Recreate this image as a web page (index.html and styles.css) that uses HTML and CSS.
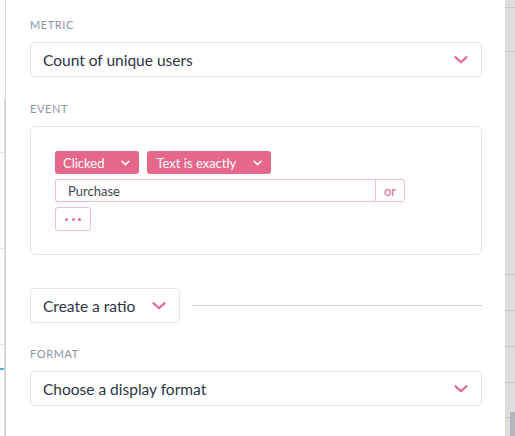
FILE: index.html
```html
<!DOCTYPE html>
<html>
<head>
<meta charset="utf-8">
<link rel="stylesheet" href="styles.css">
</head>
<body>
<div class="page">
  <div class="rail-left">
    <div class="rail-top"></div>
    <div class="rail-bottom">
      <div class="rl-gap g1"></div>
      <div class="rl-line"></div>
      <div class="rl-gap g2"></div>
      <div class="rl-line"></div>
      <div class="rl-gap g2"></div>
      <div class="rl-line"></div>
      <div class="rl-gap g3"></div>
      <div class="rl-blue"></div>
    </div>
  </div>

  <div class="panel">
    <div class="label first">METRIC</div>
    <div class="select">
      <span class="select-text">Count of unique users</span>
      <svg class="chev" width="14" height="8" viewBox="0 0 14 8"><path d="M1.5 1.2 L7 6.3 L12.5 1.2" fill="none" stroke="#e5678b" stroke-width="2.2" stroke-linecap="round" stroke-linejoin="round"/></svg>
    </div>

    <div class="label">EVENT</div>
    <div class="event-box">
      <div class="pills">
        <div class="pill"><span>Clicked</span><svg class="pchev" width="9" height="6" viewBox="0 0 9 6"><path d="M1 1.2 L4.5 4.6 L8 1.2" fill="none" stroke="#fff" stroke-width="1.5" stroke-linecap="round" stroke-linejoin="round"/></svg></div>
        <div class="pill"><span>Text is exactly</span><svg class="pchev" width="9" height="6" viewBox="0 0 9 6"><path d="M1 1.2 L4.5 4.6 L8 1.2" fill="none" stroke="#fff" stroke-width="1.5" stroke-linecap="round" stroke-linejoin="round"/></svg></div>
      </div>
      <div class="input-row">
        <div class="input">Purchase</div>
        <div class="or">or</div>
      </div>
      <div class="dots"><i></i><i></i><i></i></div>
    </div>

    <div class="ratio-row">
      <div class="ratio-btn">
        <span class="select-text">Create a ratio</span>
        <svg class="chev" width="14" height="8" viewBox="0 0 14 8"><path d="M1.5 1.2 L7 6.3 L12.5 1.2" fill="none" stroke="#e5678b" stroke-width="2.2" stroke-linecap="round" stroke-linejoin="round"/></svg>
      </div>
      <div class="rule"></div>
    </div>

    <div class="label">FORMAT</div>
    <div class="select">
      <span class="select-text">Choose a display format</span>
      <svg class="chev" width="14" height="8" viewBox="0 0 14 8"><path d="M1.5 1.2 L7 6.3 L12.5 1.2" fill="none" stroke="#e5678b" stroke-width="2.2" stroke-linecap="round" stroke-linejoin="round"/></svg>
    </div>
  </div>

  <div class="rail-right">
    <div class="rr-gap" style="height:7px"></div>
    <div class="rr-line"></div>
    <div class="rr-gap" style="height:43px"></div>
    <div class="rr-line"></div>
    <div class="rr-gap" style="height:222px"></div>
    <div class="rr-line"></div>
    <div class="rr-gap" style="height:35px"></div>
    <div class="rr-line"></div>
    <div class="rr-gap" style="height:35px"></div>
    <div class="rr-line"></div>
    <div class="rr-gap" style="height:35px"></div>
    <div class="rr-line"></div>
    <div class="rr-gap" style="height:29px"></div>
    <div class="rr-foot">
      <div class="rr-foot-left"><div class="rr-foot-gap"></div><div class="rr-line"></div></div>
      <div class="rr-block"></div>
    </div>
  </div>
</div>
</body>
</html>
```

FILE: styles.css
```css
* { box-sizing: border-box; }
html, body { margin: 0; padding: 0; background: #fff; }
body { font-family: "Lato", "Open Sans", sans-serif; }

.page {
  display: flex;
  width: 515px;
  height: 436px;
  overflow: hidden;
}

/* left rail */
.rail-left {
  width: 6px;
  flex: none;
  display: flex;
  flex-direction: column;
}
.rail-top {
  height: 99px;
  width: 6px;
  border-right: 1px solid #d3d7dc;
}
.rail-bottom {
  flex: 1;
  width: 6px;
  border-right: 2px solid #d3d7dc;
  display: flex;
  flex-direction: column;
}
.rl-gap.g1 { height: 53px; }
.rl-gap.g2 { height: 95px; }
.rl-gap.g3 { height: 23px; }
.rl-line { height: 1px; background: #e2e4e7; }
.rl-blue { height: 2px; background: #5aa7e2; }

/* main panel */
.panel {
  width: 499px;
  flex: none;
  padding: 18px 23px 0 24px;
}
.label {
  font-size: 11px;
  line-height: 14px;
  letter-spacing: 0.6px;
  color: #8c959f;
  margin-top: 25px;
  margin-bottom: 10px;
}
.label.first { margin-top: 0; }

.select, .ratio-btn {
  height: 35px;
  border: 1px solid #e3e5e8;
  border-radius: 4px;
  display: flex;
  align-items: center;
  justify-content: space-between;
  padding: 0 13px 0 12px;
}
.select-text {
  font-size: 15.5px;
  color: #2b3542;
}
.chev { display: block; flex: none; }

.event-box {
  height: 129px;
  border: 1px solid #e3e5e8;
  border-radius: 5px;
  padding: 24px 24px 0 24px;
}
.pills {
  display: flex;
  gap: 8px;
}
.pill {
  height: 23px;
  background: #e5688b;
  border-radius: 3px;
  color: #fff;
  font-size: 13px;
  display: flex;
  align-items: center;
  padding: 0 9px 0 8px;
  gap: 17px;
}
.pill + .pill { padding-left: 9px; }
.pchev { display: block; }

.input-row {
  display: flex;
  margin-top: 5px;
  width: 350px;
  height: 23px;
}
.input {
  flex: 1;
  border: 1px solid #f2bccd;
  border-right: none;
  border-radius: 3px 0 0 3px;
  font-size: 13px;
  color: #3d4753;
  display: flex;
  align-items: center;
  padding-left: 12px;
}
.or {
  width: 30px;
  border: 1px solid #f2bccd;
  border-radius: 0 3px 3px 0;
  color: #e5688b;
  font-size: 13px;
  display: flex;
  align-items: center;
  justify-content: center;
}
.dots {
  margin-top: 5px;
  width: 36px;
  height: 24px;
  border: 1px solid #f2bccd;
  border-radius: 3px;
  display: flex;
  align-items: center;
  justify-content: center;
  gap: 3.5px;
}
.dots i {
  display: block;
  width: 3px;
  height: 3px;
  border-radius: 50%;
  background: #e5688b;
}

.ratio-row {
  margin-top: 33px;
  display: flex;
  align-items: center;
  gap: 12px;
}
.ratio-btn {
  width: 150px;
  flex: none;
}
.rule {
  flex: 1;
  height: 1px;
  background: #c9ced6;
}
.ratio-row + .label { margin-top: 24px; }

/* right rail */
.rail-right {
  width: 10px;
  flex: none;
  background: #dedede;
  display: flex;
  flex-direction: column;
}
.rr-line { height: 1px; background: #c8c8c8; }
.rr-foot {
  flex: 1;
  display: flex;
}
.rr-foot-left { width: 5px; }
.rr-foot-gap { height: 5px; }
.rr-block { flex: 1; background: #b1b7be; }
```
